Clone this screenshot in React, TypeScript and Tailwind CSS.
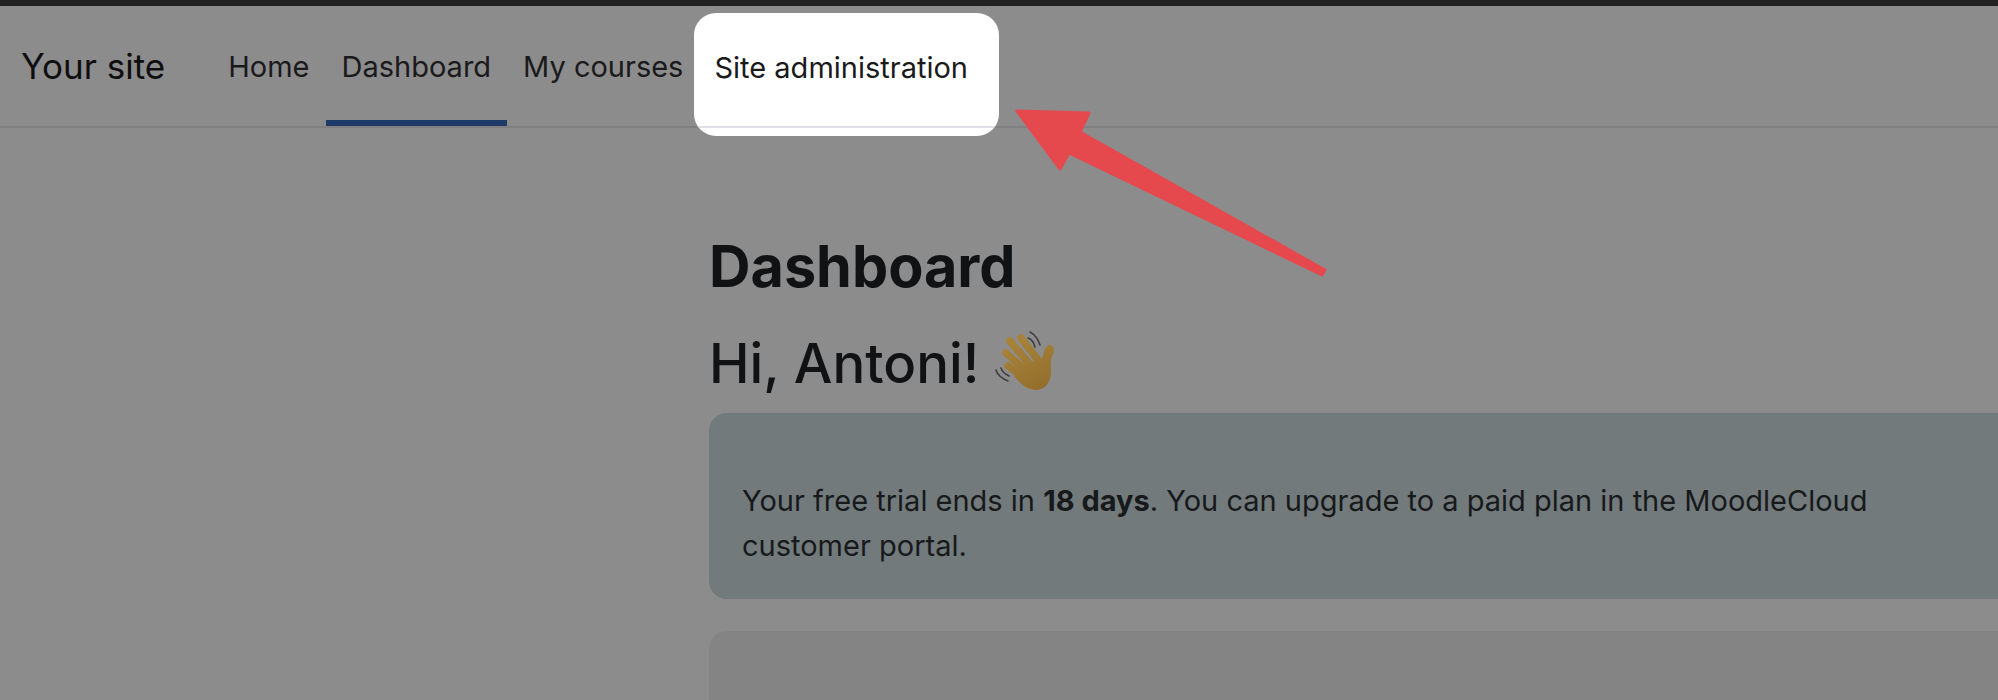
import React from 'react';

const navItems = [
  { label: 'Home', active: false },
  { label: 'Dashboard', active: true },
  { label: 'My courses', active: false },
];

function WaveEmoji() {
  return (
    <svg width="90" height="80" viewBox="0 0 90 80" className="absolute left-[271px] top-[-9px]" fill="none">
      <defs>
        <linearGradient id="hand" x1="30" y1="15" x2="60" y2="72" gradientUnits="userSpaceOnUse">
          <stop offset="0" stopColor="#a9853c" />
          <stop offset="1" stopColor="#936e2b" />
        </linearGradient>
      </defs>
      <g stroke="url(#hand)" strokeWidth="7.5" strokeLinecap="round">
        <path d="M41 18 L58 40" />
        <path d="M30 21 L50 45" />
        <path d="M26 33 L44 49" />
        <path d="M28 46 L44 57" />
      </g>
      <path d="M69 25 C74 25 75 30 73 34 C70 40 71 46 71 52 C71 62 65 70 56 70 C46 70 39 62 34 56 L46 42 L60 40 L63 36 C64 31 65 26 69 25 Z" fill="url(#hand)" />
      <g stroke="#3f3f3f" strokeWidth="1.6" strokeLinecap="round">
        <path d="M50 12 C54 14 58 19 60 25" />
        <path d="M48 18 C51 19 54 23 55 27" />
        <path d="M16 50 C17 54 22 59 28 61" />
        <path d="M21 48 C22 51 25 54 29 56" />
      </g>
    </svg>
  );
}

export default function App() {
  return (
    <div className="relative h-[700px] w-[1998px] overflow-hidden bg-[#8c8c8c] font-['Inter',sans-serif] text-[#111214]">
      <div className="h-[6px] bg-[#222222]" />

      {/* Navbar */}
      <nav className="flex h-[122px] items-stretch border-b-2 border-[#808080] pl-[21px]">
        <div className="mr-[47px] flex items-center text-[35px] leading-none text-[#0e0e0e]">Your site</div>
        <ul className="flex items-stretch">
          {navItems.map((item) => (
            <li
              key={item.label}
              className={
                item.active
                  ? 'flex items-center border-b-[6px] border-[#1d3a68] px-[16px] pt-[6px] text-[29px] leading-none text-[#1a1a1c]'
                  : 'flex items-center border-b-[6px] border-transparent px-[16px] pt-[6px] text-[29px] leading-none text-[#1a1a1c]'
              }
            >
              {item.label}
            </li>
          ))}
          {/* Spotlighted link, cut out of the dimmed overlay */}
          <li className="relative z-10 mt-[7px] -ml-[5px] flex h-[123px] w-[305px] items-center overflow-hidden rounded-[22px] bg-white pb-[15px] pl-[20px] text-[29px] leading-none whitespace-nowrap text-[#1a1a1c]">
            Site administration
            <div className="absolute right-0 bottom-[8px] left-0 h-[2px] bg-[#e0e0e6]" />
          </li>
        </ul>
      </nav>

      {/* Main content */}
      <main className="ml-[709px] w-[1400px] pt-[104px]">
        <h1 className="text-[57.5px] leading-[68px] font-bold text-[#111214]">Dashboard</h1>
        <h2 className="relative mt-[29px] text-[54.5px] leading-[68px] font-medium text-[#111214]">
          Hi, Antoni!
          <WaveEmoji />
        </h2>
        <div className="mt-[16px] h-[186px] rounded-[18px] bg-[#727a7c] px-[33px] pt-[65px] text-[29px] leading-[45px] text-[#17191b]">
          Your free trial ends in <strong className="font-bold">18 days</strong>. You can upgrade to a paid plan in the MoodleCloud
          <br />
          customer portal.
        </div>
        <div className="mt-[32px] h-[200px] rounded-[18px] bg-[#848484]" />
      </main>

      {/* Annotation arrow */}
      <svg className="absolute top-0 left-0" width="1998" height="700" fill="none">
        <path
          d="M1017 111 L1089 113 L1080 132 L1325 270 L1322 275 L1069 153 L1060 169 Z"
          fill="#e5494e"
          stroke="#e5494e"
          strokeWidth="3"
          strokeLinejoin="round"
        />
      </svg>
    </div>
  );
}
